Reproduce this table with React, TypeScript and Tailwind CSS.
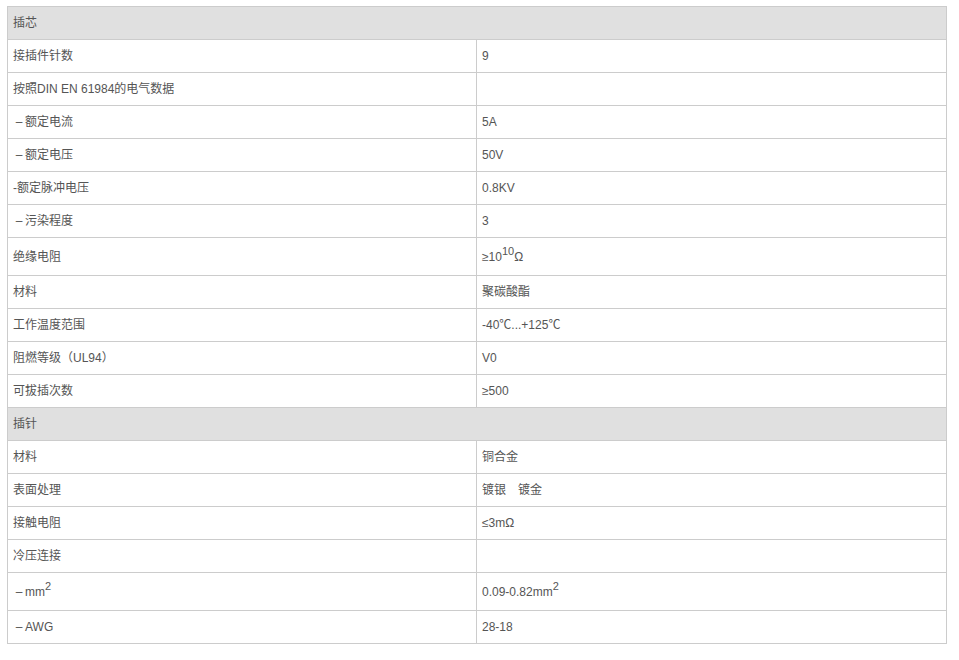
import React from 'react';

type Row = {
  label: React.ReactNode;
  value?: React.ReactNode;
  header?: boolean;
  tall?: boolean;
};

const Sup: React.FC<{ children: React.ReactNode }> = ({ children }) => (
  <sup className="relative -top-[6px] align-baseline text-[11px]">{children}</sup>
);

// fullwidth-style dash, drawn short as in the reference
const Dash = () => <span className="inline-block w-[12px] text-center">–</span>;

const rows: Row[] = [
  { label: '插芯', header: true },
  { label: '接插件针数', value: '9' },
  { label: '按照DIN EN 61984的电气数据', value: '' },
  { label: <><Dash />额定电流</>, value: '5A' },
  { label: <><Dash />额定电压</>, value: '50V' },
  { label: '-额定脉冲电压', value: '0.8KV' },
  { label: <><Dash />污染程度</>, value: '3' },
  {
    label: '绝缘电阻',
    value: (
      <>
        ≥10<Sup>10</Sup>Ω
      </>
    ),
    tall: true,
  },
  { label: '材料', value: '聚碳酸酯' },
  { label: '工作温度范围', value: '-40℃...+125℃' },
  { label: '阻燃等级（UL94）', value: 'V0' },
  { label: '可拔插次数', value: '≥500' },
  { label: '插针', header: true },
  { label: '材料', value: '铜合金' },
  { label: '表面处理', value: '镀银　镀金' },
  { label: '接触电阻', value: '≤3mΩ' },
  { label: '冷压连接', value: '' },
  {
    label: (
      <>
        <Dash />mm<Sup>2</Sup>
      </>
    ),
    value: (
      <>
        0.09-0.82mm<Sup>2</Sup>
      </>
    ),
    tall: true,
  },
  { label: <><Dash />AWG</>, value: '28-18' },
];

export default function App() {
  return (
    <div
      className="min-h-[660px] w-[959px] bg-white pl-[7px] pt-[6px] text-[12px] text-[#555]"
      style={{ fontFamily: '"Liberation Sans", Arial, "Noto Sans CJK SC", sans-serif' }}
    >
      <div className="w-[940px] border border-b-0 border-[#cccccc]">
        {rows.map((row, i) =>
          row.header ? (
            <div key={i} className="flex h-[33px] items-center border-b border-[#cccccc] bg-[#e0e0e0] pl-[5px]">
              {row.label}
            </div>
          ) : (
            <div
              key={i}
              className={`flex border-b border-[#cccccc] ${row.tall ? 'h-[38px]' : 'h-[33px]'}`}
            >
              <div className="flex w-[469px] items-center whitespace-pre border-r border-[#cccccc] pl-[5px]">{row.label}</div>
              <div className="flex flex-1 items-center whitespace-pre pl-[5px]">{row.value}</div>
            </div>
          )
        )}
      </div>
    </div>
  );
}
